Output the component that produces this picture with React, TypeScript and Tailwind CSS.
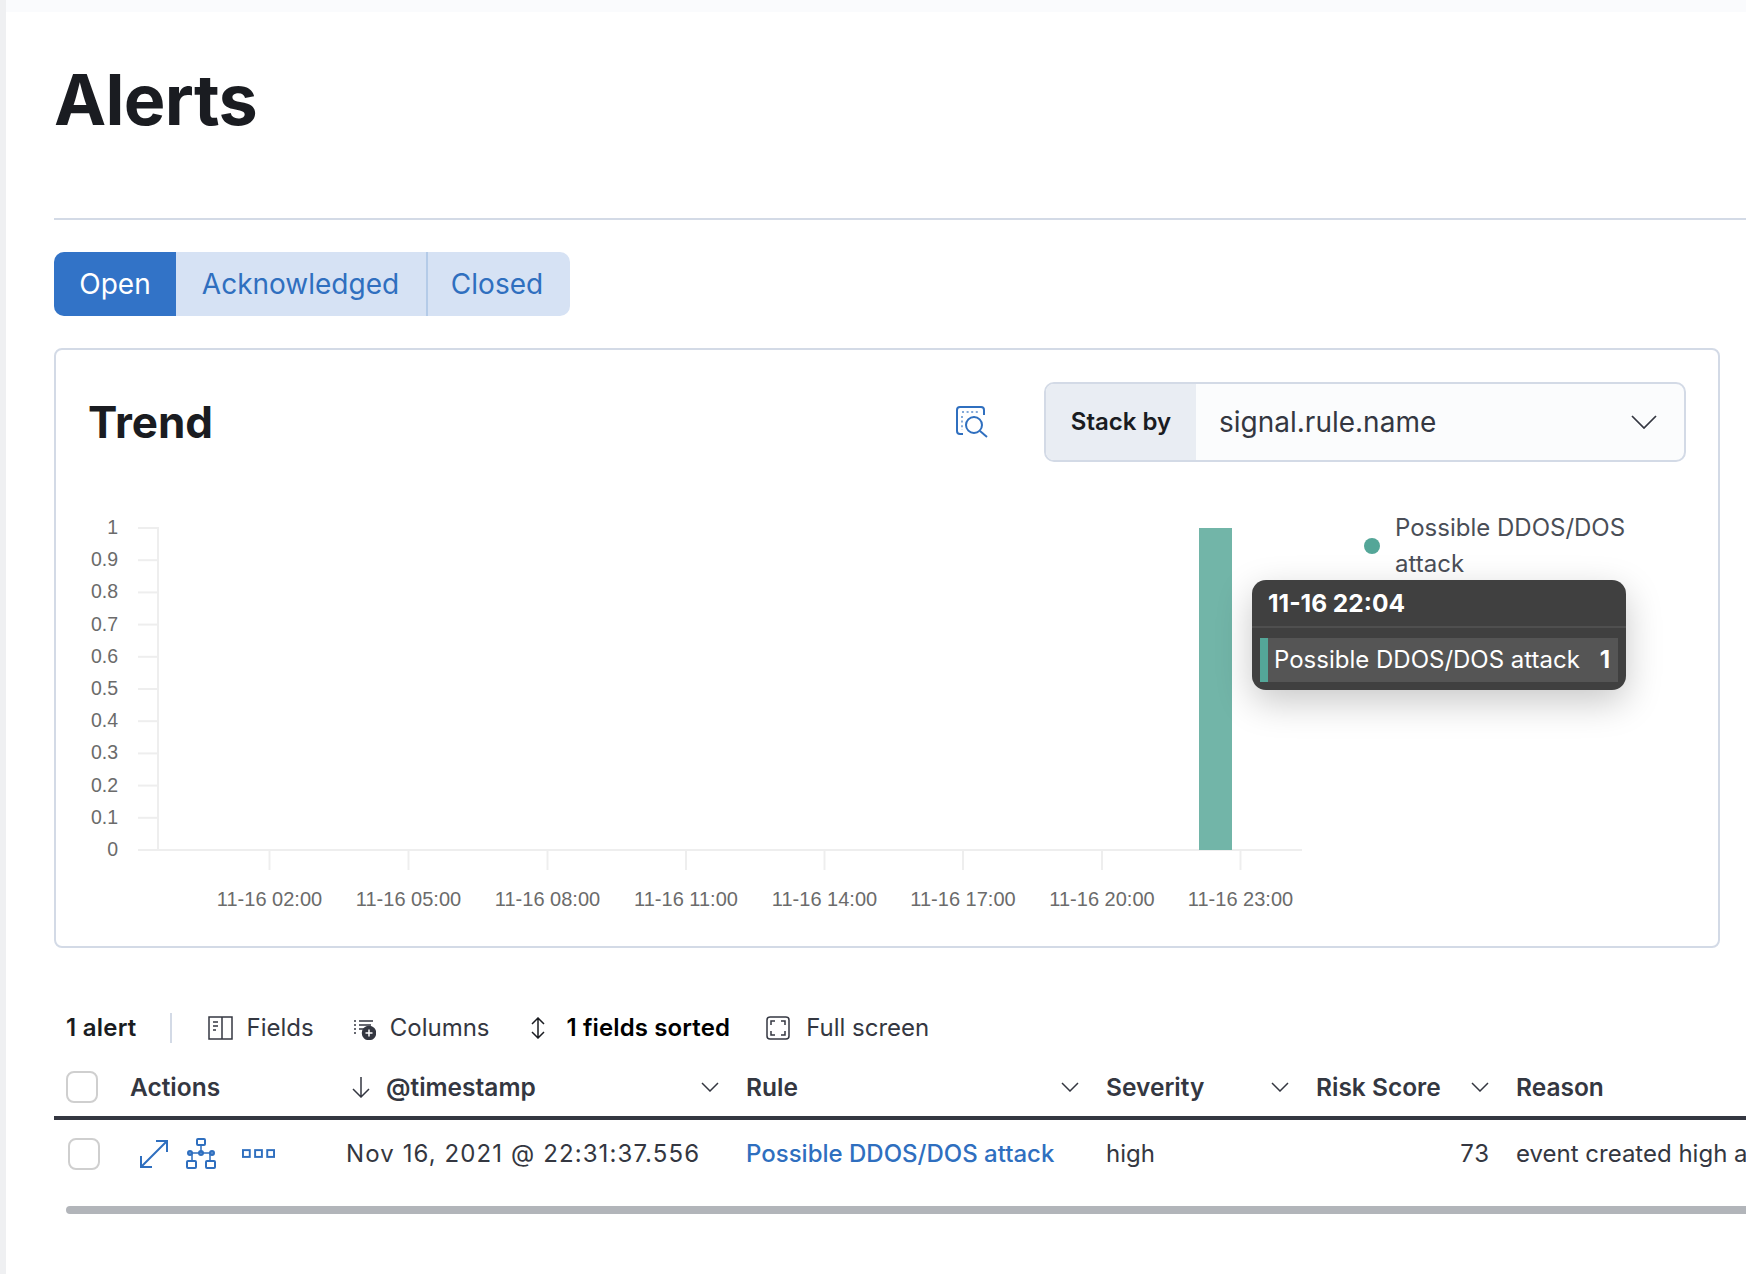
const yTicks = ["1", "0.9", "0.8", "0.7", "0.6", "0.5", "0.4", "0.3", "0.2", "0.1", "0"];
const xTicks = [
  { x: 269.5, label: "11-16 02:00" },
  { x: 408.5, label: "11-16 05:00" },
  { x: 547.5, label: "11-16 08:00" },
  { x: 686, label: "11-16 11:00" },
  { x: 824.5, label: "11-16 14:00" },
  { x: 963, label: "11-16 17:00" },
  { x: 1102, label: "11-16 20:00" },
  { x: 1240.5, label: "11-16 23:00" },
];

function Chevron({ className }: { className?: string }) {
  return (
    <svg width="18" height="10" viewBox="0 0 18 10" fill="none" stroke="#343741" strokeWidth="1.5" className={className}>
      <path d="M1 1l8 8 8-8" />
    </svg>
  );
}

function Checkbox() {
  return <div className="h-[32px] w-[32px] rounded-[8px] border-[2px] border-[#cfcfcf] bg-white" />;
}

function TrendChart() {
  return (
    <svg width="1220" height="425" viewBox="87 500 1220 425" className="shrink-0" style={{ fontFamily: "'Liberation Sans', sans-serif" }}>
      {yTicks.map((t, i) => {
        const y = 528 + i * 32.2;
        return (
          <g key={t}>
            <line x1="138" x2="158" y1={y} y2={y} stroke="#eeeeee" strokeWidth="2" />
            <text x="118" y={y + 6} textAnchor="end" fontSize="19.5" fill="#6b6b6b">
              {t}
            </text>
          </g>
        );
      })}
      <line x1="158" x2="158" y1="527" y2="851" stroke="#eeeeee" strokeWidth="2" />
      <line x1="138" x2="1302" y1="850" y2="850" stroke="#eeeeee" strokeWidth="2" />
      {xTicks.map((t) => (
        <g key={t.label}>
          <line x1={t.x} x2={t.x} y1="850" y2="870" stroke="#eeeeee" strokeWidth="2" />
          <text x={t.x} y="906" textAnchor="middle" fontSize="20" fill="#6b6b6b">
            {t.label}
          </text>
        </g>
      ))}
      <rect x="1199" y="528" width="33" height="322" fill="#72b5a8" />
    </svg>
  );
}

export default function App() {
  return (
    <div className="flex h-[1274px] w-[1746px] overflow-hidden bg-white text-[#343741] [font-family:Inter,sans-serif]">
      <div className="w-[6px] shrink-0 bg-[#eff0f2]" />
      <div className="flex min-w-0 flex-1 flex-col">
        <div className="h-[12px] bg-[#fafbfd]" />
        <div className="ml-[48px] flex flex-col">
          {/* Page header */}
          <div className="h-[208px] border-b-[2px] border-[#d3dae6] pt-[50px]">
            <h1 className="text-[70px] leading-[76px] font-bold tracking-[-0.01em] text-[#1a1c21]">Alerts</h1>
          </div>

          {/* Status filter */}
          <div className="mt-[32px] flex h-[64px] w-[516px] overflow-hidden rounded-[10px] bg-[#d6e2f4] text-[28px] text-[#2f6fbf]">
            <div className="flex w-[122px] items-center justify-center bg-[#3273c7] text-white">Open</div>
            <div className="flex w-[252px] items-center justify-center border-r-[2px] border-[#b4cbe8] pr-[1px]">Acknowledged</div>
            <div className="flex flex-1 items-center justify-center pr-[4px]">Closed</div>
          </div>

          {/* Trend panel */}
          <div className="relative mt-[32px] mr-[26px] h-[600px] rounded-[8px] border-[2px] border-[#d3dae6] pt-[32px] pr-[32px] pl-[32px]">
            <div className="flex h-[80px] items-center">
              <h2 className="flex-1 text-[44px] leading-none font-bold text-[#1a1c21]">Trend</h2>
              <svg width="34" height="32" viewBox="0 0 34 32" fill="none" stroke="#2f6fbf" strokeWidth="2">
                <path d="M8 28H5a3 3 0 0 1-3-3V4a3 3 0 0 1 3-3h21a3 3 0 0 1 3 3v5" />
                <path d="M7 6h18M7 10v14" strokeDasharray="2 2.6" strokeOpacity="0.6" />
                <circle cx="19" cy="19" r="8" />
                <path d="M25 25l7 6" />
              </svg>
              <div className="ml-[55px] flex h-[80px] w-[642px] overflow-hidden rounded-[10px] border-[2px] border-[#d3dae6] bg-[#fbfcfd]">
                <div className="flex w-[150px] items-center justify-center bg-[#e9edf3] text-[24px] font-semibold text-[#1a1c21]">Stack by</div>
                <div className="flex flex-1 items-center justify-between pr-[27px] pl-[23px] text-[28px] text-[#343741]">
                  <span>signal.rule.name</span>
                  <svg width="26" height="14" viewBox="0 0 26 14" fill="none" stroke="#343741" strokeWidth="1.75">
                    <path d="M1 1l12 12L25 1" />
                  </svg>
                </div>
              </div>
            </div>

            <div className="mt-[38px] -ml-[1px] flex items-start">
              <TrendChart />
              <div className="mt-[10px] ml-[57px] flex items-center gap-[15px]">
                <div className="h-[16px] w-[16px] rounded-full bg-[#54a698]" />
                <div className="w-[240px] text-[24px] leading-[36px] text-[#4a4e57]">Possible DDOS/DOS attack</div>
              </div>
            </div>

            {/* Chart tooltip */}
            <div className="absolute top-[230px] left-[1196px] w-[374px] rounded-[14px] bg-[#404040] shadow-[0_12px_36px_rgba(0,0,0,0.22)]">
              <div className="flex h-[48px] items-center border-b-[2px] border-[#4f4f4f] pl-[16px] text-[24.5px] font-bold text-white">11-16 22:04</div>
              <div className="px-[8px] pt-[10px] pb-[8px]">
                <div className="flex h-[44px] items-center justify-between bg-[#555555] pr-[8px] text-[24px] text-white">
                  <div className="flex items-center">
                    <div className="h-[44px] w-[8px] bg-[#54a698]" />
                    <span className="ml-[6px]">Possible DDOS/DOS attack</span>
                  </div>
                  <span className="font-bold">1</span>
                </div>
              </div>
            </div>
          </div>

          {/* Table toolbar */}
          <div className="mt-[56px] flex h-[48px] items-center pl-[12px] text-[24px]">
            <span className="font-semibold tracking-[0.01em] text-[#1a1c21]">1 alert</span>
            <div className="mr-[36px] ml-[33px] h-[30px] w-[2px] bg-[#d3dae6]" />
            <div className="flex items-center gap-[14px] text-[#343741]">
              <svg width="25" height="24" viewBox="0 0 25 24" fill="none" stroke="#343741" strokeWidth="1.5">
                <rect x="1" y="1" width="23" height="22" />
                <path d="M14 1v22M5 6h5M5 10h5M5 14h3" />
              </svg>
              <span>Fields</span>
            </div>
            <div className="ml-[39px] flex items-center gap-[14px] text-[#343741]">
              <svg width="23" height="24" viewBox="0 0 23 24" fill="none" stroke="#343741" strokeWidth="1.5">
                <path d="M1 5h2M6 5h14M1 9h2M6 9h12M1 13h2M6 13h6M1 17h2" />
                <circle cx="16" cy="17" r="6.5" fill="#343741" />
                <path d="M16 13.5v7M12.5 17h7" stroke="#ffffff" />
              </svg>
              <span>Columns</span>
            </div>
            <div className="ml-[40px] flex items-center gap-[21px] font-semibold tracking-[0.005em] text-[#000000]">
              <svg width="16" height="22" viewBox="0 0 16 22" fill="none" stroke="#1a1c21" strokeWidth="1.5">
                <path d="M2 7l6-6 6 6M2 15l6 6 6-6M8 1v20" />
              </svg>
              <span>1 fields sorted</span>
            </div>
            <div className="ml-[36px] flex items-center gap-[16px] text-[#343741]">
              <svg width="24" height="24" viewBox="0 0 24 24" fill="none" stroke="#343741" strokeWidth="1.5">
                <rect x="1" y="1" width="22" height="22" rx="3" />
                <path d="M5 9V5h4M15 5h4v4M19 15v4h-4M9 19H5v-4" />
              </svg>
              <span>Full screen</span>
            </div>
          </div>

          {/* Table header */}
          <div className="flex h-[68px] items-center border-b-[4px] border-[#343741] pt-[6px] text-[24.5px] font-semibold whitespace-nowrap">
            <div className="w-[76px] shrink-0 pl-[12px]">
              <Checkbox />
            </div>
            <div className="w-[216px] shrink-0">Actions</div>
            <div className="flex w-[400px] shrink-0 items-center justify-between pr-[27px]">
              <div className="flex items-center gap-[15px] pl-[5px]">
                <svg width="20" height="22" viewBox="0 0 20 22" fill="none" stroke="#343741" strokeWidth="1.5">
                  <path d="M10 1v20M2 13l8 8 8-8" />
                </svg>
                <span>@timestamp</span>
              </div>
              <Chevron />
            </div>
            <div className="flex w-[360px] shrink-0 items-center justify-between pr-[27px]">
              <span>Rule</span>
              <Chevron />
            </div>
            <div className="flex w-[210px] shrink-0 items-center justify-between pr-[27px]">
              <span>Severity</span>
              <Chevron />
            </div>
            <div className="flex w-[200px] shrink-0 items-center justify-between pr-[27px]">
              <span>Risk Score</span>
              <Chevron />
            </div>
            <div className="shrink-0">Reason</div>
          </div>

          {/* Table row */}
          <div className="flex h-[66px] items-center pt-[2px] text-[24px] whitespace-nowrap">
            <div className="w-[76px] shrink-0 pl-[14px]">
              <Checkbox />
            </div>
            <div className="flex w-[216px] shrink-0 items-center pl-[9px]">
              <svg width="30" height="30" viewBox="0 0 30 30" fill="none" stroke="#2f6fbf" strokeWidth="2">
                <path d="M3 27L27 3M17 2h11v11M2 17v11h11" />
              </svg>
              <svg width="32" height="32" viewBox="0 0 32 32" fill="none" stroke="#2f6fbf" strokeWidth="2" className="ml-[16px]">
                <rect x="12" y="1" width="8" height="6" rx="1" />
                <path d="M16 7v8M3 15h26M7 15v7M25 15v7" strokeWidth="1.5" />
                <circle cx="5" cy="15" r="2" />
                <circle cx="16" cy="15" r="2" />
                <circle cx="27" cy="15" r="2" />
                <rect x="2" y="23" width="9" height="7" rx="1" />
                <rect x="21" y="23" width="9" height="7" rx="1" />
              </svg>
              <svg width="33" height="10" viewBox="0 0 34 10" fill="none" stroke="#2f6fbf" strokeWidth="2" className="ml-[25px]">
                <rect x="1" y="1" width="7" height="7" />
                <rect x="13.5" y="1" width="7" height="7" />
                <rect x="26" y="1" width="7" height="7" />
              </svg>
            </div>
            <div className="w-[400px] shrink-0 tracking-[0.046em]">Nov 16, 2021 @ 22:31:37.556</div>
            <div className="w-[360px] shrink-0 font-medium text-[#2f6fbf]">Possible DDOS/DOS attack</div>
            <div className="w-[210px] shrink-0">high</div>
            <div className="w-[200px] shrink-0 pr-[26px] text-right tracking-[0.035em]">73</div>
            <div className="shrink-0">event created high alert</div>
          </div>

          {/* Horizontal scrollbar */}
          <div className="mt-[20px] ml-[12px] h-[8px] rounded-l-[4px] bg-[#b2b5ba]" />
        </div>
      </div>
    </div>
  );
}
